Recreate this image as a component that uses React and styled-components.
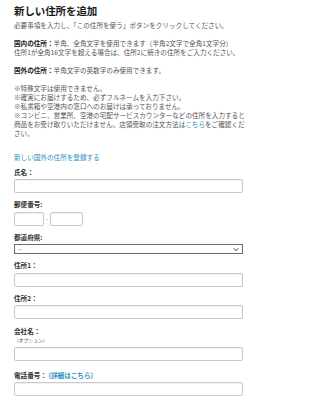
import React from 'react'
import styled, { createGlobalStyle } from 'styled-components'

const GlobalStyle = createGlobalStyle`
  html, body {
    margin: 0;
    padding: 0;
    background: #fff;
  }
  body {
    font-family: "Noto Sans CJK JP", "Noto Sans", sans-serif;
    color: #555;
  }
`;

const Page = styled.div`
  width: 248px;
  padding: 4px 14px 8px 14px;
`;

const Title = styled.h1`
  margin: 0;
  font-size: 10.5px;
  line-height: 13px;
  font-weight: 700;
  color: #1a1a1a;
  letter-spacing: -0.1px;
`;

const Para = styled.p`
  margin: ${p => p.$top || 9}px 0 0 0;
  font-size: 6.6px;
  line-height: 9px;
  color: #555;
  white-space: nowrap;
`;

const Strong = styled.b`
  font-weight: 700;
  color: #222;
`;

const Link = styled.a`
  color: #2b8fc0;
  text-decoration: none;
  cursor: pointer;
`;

const AddLink = styled.div`
  margin-top: 15px;
  font-size: 6.6px;
  line-height: 9px;
  color: #2b8fc0;
`;

const Form = styled.div`
  display: flex;
  flex-direction: column;
  gap: 7px;
  margin-top: 6px;
`;

const Field = styled.div`
  display: flex;
  flex-direction: column;
  margin-top: ${p => p.$extra || 0}px;
`;

const Label = styled.label`
  font-size: 6.6px;
  line-height: 9px;
  font-weight: 700;
  color: #333;
  margin-bottom: ${p => p.$gap ?? 2.5}px;
`;

const Hint = styled.span`
  font-size: 4.8px;
  line-height: 8px;
  color: #555;
  margin-bottom: 2.5px;
`;

const Input = styled.input`
  box-sizing: border-box;
  width: ${p => p.$w || 229}px;
  height: 14px;
  margin: 0;
  padding: 0 3px;
  border: 1px solid #c9c9c9;
  border-radius: 2px;
  box-shadow: inset 0 1px 1px rgba(0, 0, 0, 0.06);
  background: #fff;
  font-size: 7px;
  outline: none;
`;

const ZipRow = styled.div`
  display: flex;
  align-items: center;
`;

const Dash = styled.span`
  width: 6px;
  text-align: center;
  font-size: 6px;
  color: #777;
`;

const SelectBox = styled.div`
  box-sizing: border-box;
  display: flex;
  align-items: center;
  justify-content: space-between;
  width: 229px;
  height: 10px;
  padding: 0 3px;
  border: 1px solid #6b6b6b;
  background: #fff;
  font-size: 5.5px;
  line-height: 8px;
  color: #555;
  cursor: pointer;
`;

const Chevron = styled.svg`
  width: 6px;
  height: 5px;
  flex: none;
`;

export default function App() {
  return (
    <>
      <GlobalStyle />
      <Page>
        <Title>新しい住所を追加</Title>
        <Para $top={3.5}>必要事項を入力し、「この住所を使う」ボタンをクリックしてください。</Para>
        <Para>
          <Strong>国内の住所：</Strong>半角、全角文字を使用できます（半角2文字で全角1文字分）<br />
          住所1が全角16文字を超える場合は、住所2に続きの住所をご入力ください。
        </Para>
        <Para>
          <Strong>国外の住所：</Strong>半角文字の英数字のみ使用できます。
        </Para>
        <Para>
          ※特殊文字は使用できません。<br />
          ※確実にお届けするため、必ずフルネームを入力下さい。<br />
          ※私書箱や空港内の窓口へのお届けは承っておりません。<br />
          ※コンビニ、営業所、空港の宅配サービスカウンターなどの住所を入力すると<br />
          商品をお受け取りいただけません。店頭受取の注文方法は<Link>こちら</Link>をご確認くだ<br />
          さい。
        </Para>

        <AddLink>新しい国外の住所を登録する</AddLink>

        <Form>
          <Field>
            <Label>氏名：</Label>
            <Input type="text" />
          </Field>

          <Field>
            <Label>郵便番号:</Label>
            <ZipRow>
              <Input type="text" $w={30} />
              <Dash>-</Dash>
              <Input type="text" $w={33} />
            </ZipRow>
          </Field>

          <Field>
            <Label>都道府県:</Label>
            <SelectBox role="combobox">
              <span>--</span>
              <Chevron viewBox="0 0 12 10">
                <path d="M1.5 2.5 L6 7.5 L10.5 2.5" fill="none" stroke="#333" strokeWidth="1.8" />
              </Chevron>
            </SelectBox>
          </Field>

          <Field>
            <Label>住所1：</Label>
            <Input type="text" />
          </Field>

          <Field>
            <Label>住所2：</Label>
            <Input type="text" />
          </Field>

          <Field $extra={1}>
            <Label $gap={0}>会社名：</Label>
            <Hint>（オプション）</Hint>
            <Input type="text" />
          </Field>

          <Field $extra={3}>
            <Label>電話番号： <Link>(詳細はこちら)</Link></Label>
            <Input type="text" />
          </Field>
        </Form>
      </Page>
    </>
  )
}
